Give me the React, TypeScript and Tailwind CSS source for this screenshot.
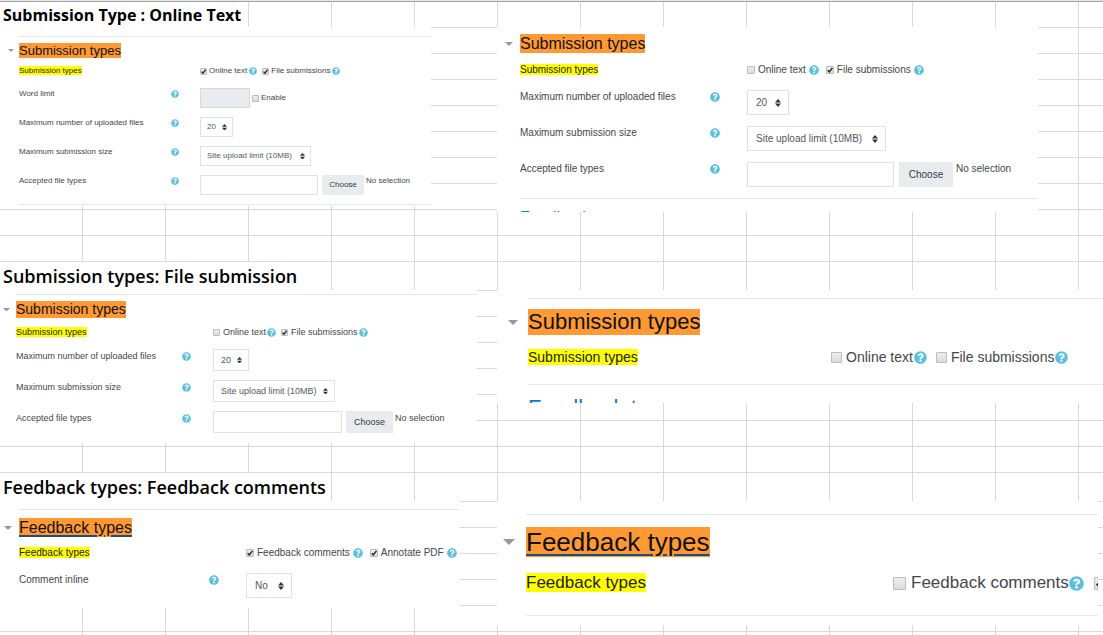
import { ReactNode, useId } from "react";
import { FaQuestionCircle } from "react-icons/fa";

// Every panel is the same form at another zoom level.
const sizes = {
  xs: {
    indent: "pl-[19px]",
    rule: "ml-[19px]",
    caretBox: "w-[19px] pr-[5px]",
    caret: "w-[6px]",
    heading: "h-[28px] pt-[6px] text-[13px] leading-[15px]",
    text: "text-[8px] leading-[12px]",
    cols: "grid-cols-[152px_29px_1fr]",
    options: "h-[23px]",
    row: "h-[29px]",
    check: "size-[7px]",
    checkGap: "gap-[2px]",
    helpGap: "gap-[2px]",
    optionGap: "gap-[5px]",
    icon: "size-[8px]",
    control: "h-[20px]",
    pad: "pl-[6px] pr-[14px]",
    arrows: "right-[6px] w-[5px]",
    input: "w-[118px]",
    choose: "w-[42px]",
    gap: "gap-[4px]",
  },
  sm: {
    indent: "pl-[16px]",
    rule: "ml-[16px]",
    caretBox: "w-[16px] pr-[6px]",
    caret: "w-[7px]",
    heading: "h-[30px] pt-[6px] text-[14px] leading-[17px]",
    text: "text-[9px] leading-[14px]",
    cols: "grid-cols-[166px_31px_1fr]",
    options: "h-[24px]",
    row: "h-[31px]",
    check: "size-[7px]",
    checkGap: "gap-[3px]",
    helpGap: "gap-px",
    optionGap: "gap-[5px]",
    icon: "size-[9px]",
    control: "h-[22px]",
    pad: "pl-[7px] pr-[14px]",
    arrows: "right-[7px] w-[5px]",
    input: "w-[129px]",
    choose: "w-[47px]",
    gap: "gap-[4px]",
  },
  md: {
    indent: "pl-[23px]",
    rule: "ml-[23px]",
    caretBox: "w-[23px] pr-[7px]",
    caret: "w-[8px]",
    heading: "h-[29px] text-[16px] leading-[19px]",
    text: "text-[10px] leading-[14px]",
    cols: "grid-cols-[190px_37px_1fr]",
    options: "h-[27px]",
    row: "h-[36px]",
    check: "size-[8px]",
    checkGap: "gap-[3px]",
    helpGap: "gap-[3px]",
    optionGap: "gap-[7px]",
    icon: "size-[10px]",
    control: "h-[25px]",
    pad: "pl-[8px] pr-[16px]",
    arrows: "right-[8px] w-[6px]",
    input: "w-[147px]",
    choose: "w-[54px]",
    gap: "gap-[5px]",
  },
  mdNarrow: {
    indent: "pl-[19px]",
    rule: "ml-[19px]",
    caretBox: "w-[19px] pr-[7px]",
    caret: "w-[8px]",
    heading: "h-[36px] pt-[8px] text-[16px] leading-[19px]",
    text: "text-[10px] leading-[14px]",
    cols: "grid-cols-[190px_37px_1fr]",
    options: "h-[27px]",
    row: "h-[36px]",
    check: "size-[8px]",
    checkGap: "gap-[3px]",
    helpGap: "gap-[3px]",
    optionGap: "gap-[7px]",
    icon: "size-[10px]",
    control: "h-[25px]",
    pad: "pl-[8px] pr-[16px]",
    arrows: "right-[8px] w-[6px]",
    input: "w-[147px]",
    choose: "w-[54px]",
    gap: "gap-[5px]",
  },
  lg: {
    indent: "pl-[31px]",
    rule: "ml-[31px]",
    caretBox: "w-[31px] pr-[10px]",
    caret: "w-[10px]",
    heading: "h-[50px] pt-[10px] text-[22px] leading-[26px]",
    text: "text-[14px] leading-[16px]",
    cols: "grid-cols-[253px_50px_1fr]",
    options: "h-[35px]",
    row: "h-[50px]",
    check: "size-[11px]",
    checkGap: "gap-[4px]",
    helpGap: "gap-px",
    optionGap: "gap-[9px]",
    icon: "size-[13px]",
    control: "h-[34px]",
    pad: "pl-[11px] pr-[26px]",
    arrows: "right-[10px] w-[8px]",
    input: "w-[200px]",
    choose: "w-[74px]",
    gap: "gap-[6px]",
  },
  xl: {
    indent: "pl-[29px]",
    rule: "ml-[29px]",
    caretBox: "w-[29px] pr-[11px]",
    caret: "w-[12px]",
    heading: "h-[59px] pt-[12px] text-[26px] leading-[30px]",
    text: "text-[17px] leading-[18px]",
    cols: "grid-cols-[306px_61px_1fr]",
    options: "h-[41px]",
    row: "h-[60px]",
    check: "size-[13px]",
    checkGap: "gap-[5px]",
    helpGap: "gap-0",
    optionGap: "gap-[10px]",
    icon: "size-[15px]",
    control: "h-[40px]",
    pad: "pl-[13px] pr-[32px]",
    arrows: "right-[12px] w-[9px]",
    input: "w-[240px]",
    choose: "w-[90px]",
    gap: "gap-[8px]",
  },
};

type Size = keyof typeof sizes;

function Help({ size }: { size: Size }) {
  return <FaQuestionCircle className={`shrink-0 text-[#5bc0de] ${sizes[size].icon}`} />;
}

function Check({ size, label, checked = false, help = true }: { size: Size; label: string; checked?: boolean; help?: boolean }) {
  const s = sizes[size];
  return (
    <span className={`flex shrink-0 items-center ${s.helpGap}`}>
      <label className={`flex items-center ${s.checkGap}`}>
        <span className={`relative block shrink-0 ${s.check}`}>
          <input
            type="checkbox"
            defaultChecked={checked}
            className="peer block size-full appearance-none rounded-[1px] border border-[#bcbcbc] bg-linear-to-b from-[#eeeeee] to-[#dcdcdc]"
          />
          <svg viewBox="0 0 10 10" className="pointer-events-none absolute inset-0 hidden size-full peer-checked:block">
            <path d="M2.2 5.2 4.2 7.4 8 2.4" fill="none" stroke="#222" strokeWidth="1.8" />
          </svg>
        </span>
        {label}
      </label>
      {help && <Help size={size} />}
    </span>
  );
}

function Row({ size, label, children }: { size: Size; label: string; children: (id: string) => ReactNode }) {
  const s = sizes[size];
  const id = useId();
  return (
    <div className={`grid items-start ${s.cols} ${s.row} ${s.text}`}>
      <label htmlFor={id}>{label}</label>
      <span className="flex h-[1lh] items-center">
        <Help size={size} />
      </span>
      {children(id)}
    </div>
  );
}

function Select({ size, id, value, width }: { size: Size; id: string; value: string; width: string }) {
  const s = sizes[size];
  return (
    <span className={`relative block ${width}`}>
      <select id={id} className={`block w-full appearance-none border border-[#dde2e7] bg-white text-[#55595c] ${s.control} ${s.pad}`}>
        <option>{value}</option>
      </select>
      <span className={`pointer-events-none absolute inset-y-0 flex items-center ${s.arrows}`}>
        <svg viewBox="0 0 6 8" className="w-full fill-[#333]">
          <path d="M0 3.4 3 0l3 3.4zM0 4.6 3 8l3-3.4z" />
        </svg>
      </span>
    </span>
  );
}

function FilePicker({ size, id }: { size: Size; id: string }) {
  const s = sizes[size];
  return (
    <div className={`flex items-start ${s.gap}`}>
      <input id={id} type="text" className={`border border-[#dde2e7] ${s.control} ${s.input}`} />
      <button type="button" className={`bg-[#e9ecef] text-[#373a3c] ${s.control} ${s.choose}`}>
        Choose
      </button>
      <span className="-ml-0.5 whitespace-nowrap">No selection</span>
    </div>
  );
}

type PanelProps = {
  size: Size;
  title: string;
  className: string;
  underline?: string;
  options: ReactNode;
  children?: ReactNode;
};

function Panel({ size, title, className, underline = "", options, children }: PanelProps) {
  const s = sizes[size];
  return (
    <div className={`w-full overflow-hidden bg-white text-[#43474a] ${className}`}>
      {size !== "md" && <div className={`border-t border-[#e4e7ea] ${s.rule}`} />}
      <div className={`flex items-start ${s.heading}`}>
        <span className={`flex h-[1lh] shrink-0 items-center justify-end ${s.caretBox}`}>
          <svg viewBox="0 0 10 5" className={`fill-[#999] ${s.caret}`}>
            <path d="M0 0h10L5 5z" />
          </svg>
        </span>
        <h3 className={`bg-[#ff9933] text-[#111] ${underline}`}>{title}</h3>
      </div>
      <div className={s.indent}>
        <div className={`grid items-start ${s.cols} ${s.options} ${s.text}`}>
          <div className="col-span-2">
            <span className="bg-[#ffff00] text-[#222]">{title}</span>
          </div>
          <div className={`flex h-[1lh] items-center whitespace-nowrap ${s.optionGap}`}>{options}</div>
        </div>
        {children}
      </div>
    </div>
  );
}

function Title({ children, className }: { children: ReactNode; className: string }) {
  return <h2 className={`flex h-full items-center bg-white pl-[3px] font-['Open_Sans',sans-serif] whitespace-nowrap text-black ${className}`}>{children}</h2>;
}

const rows = "flex items-start bg-[repeating-linear-gradient(to_bottom,#d9d9d9_0_1px,transparent_1px_26px)]";

export default function App() {
  return (
    <main className="min-h-screen overflow-hidden bg-white bg-[repeating-linear-gradient(to_right,transparent_0_82px,#d9d9d9_82px_83px)] font-['Liberation_Sans',Arial,sans-serif]">
      <section>
        <div className="h-[2px] border-b border-[#a3a9ad] bg-[#e3e6e8]" />
        <div className="h-[25px]">
          <Title className="w-[248px] text-[16px] font-bold">Submission Type : Online Text</Title>
        </div>
        <div className={`h-[234px] ${rows}`}>
          <div className="w-[497px] shrink-0">
            <Panel
              size="xs"
              title="Submission types"
              className="h-[179px] max-w-[431px] pt-[9px]"
              options={
                <>
                  <Check size="xs" label="Online text" checked />
                  <Check size="xs" label="File submissions" checked />
                </>
              }
            >
              <Row size="xs" label="Word limit">
                {(id) => (
                  <div className="flex items-center gap-[2px]">
                    <input id={id} type="text" disabled className="h-[20px] w-[50px] border border-[#d5dade] bg-[#e9ecef]" />
                    <Check size="xs" label="Enable" help={false} />
                  </div>
                )}
              </Row>
              <Row size="xs" label="Maximum number of uploaded files">
                {(id) => <Select size="xs" id={id} value="20" width="w-[33px]" />}
              </Row>
              <Row size="xs" label="Maximum submission size">
                {(id) => <Select size="xs" id={id} value="Site upload limit (10MB)" width="w-[111px]" />}
              </Row>
              <Row size="xs" label="Accepted file types">
                {(id) => <FilePicker size="xs" id={id} />}
              </Row>
              <div className="border-t border-[#e4e7ea]" />
            </Panel>
          </div>
          <div className="min-w-0 flex-1">
            <Panel
              size="md"
              title="Submission types"
              className="h-[185px] max-w-[541px] pt-[7px]"
              options={
                <>
                  <Check size="md" label="Online text" />
                  <Check size="md" label="File submissions" checked />
                </>
              }
            >
              <Row size="md" label="Maximum number of uploaded files">
                {(id) => <Select size="md" id={id} value="20" width="w-[42px]" />}
              </Row>
              <Row size="md" label="Maximum submission size">
                {(id) => <Select size="md" id={id} value="Site upload limit (10MB)" width="w-[139px]" />}
              </Row>
              <Row size="md" label="Accepted file types">
                {(id) => <FilePicker size="md" id={id} />}
              </Row>
              <h3 className="border-t border-[#e4e7ea] pt-[9px] text-[16px] leading-[19px] text-[#1177d1]">Feedback types</h3>
            </Panel>
          </div>
        </div>
      </section>

      <section>
        <div className="h-[29px] border-t border-[#d9d9d9]">
          <Title className="w-[331px] text-[18px] font-[650]">Submission types: File submission</Title>
        </div>
        <div className={`h-[182px] ${rows}`}>
          <div className="w-[497px] shrink-0">
            <Panel
              size="sm"
              title="Submission types"
              className="h-[153px] max-w-[477px] pt-[4px]"
              options={
                <>
                  <Check size="sm" label="Online text" />
                  <Check size="sm" label="File submissions" checked />
                </>
              }
            >
              <Row size="sm" label="Maximum number of uploaded files">
                {(id) => <Select size="sm" id={id} value="20" width="w-[36px]" />}
              </Row>
              <Row size="sm" label="Maximum submission size">
                {(id) => <Select size="sm" id={id} value="Site upload limit (10MB)" width="w-[122px]" />}
              </Row>
              <Row size="sm" label="Accepted file types">
                {(id) => <FilePicker size="sm" id={id} />}
              </Row>
            </Panel>
          </div>
          <div className="min-w-0 flex-1">
            <Panel
              size="lg"
              title="Submission types"
              className="h-[113px] pt-[8px]"
              options={
                <>
                  <Check size="lg" label="Online text" />
                  <Check size="lg" label="File submissions" />
                </>
              }
            >
              <h3 className="border-t border-[#e4e7ea] pt-[10px] text-[22px] leading-[26px] text-[#1177d1]">Feedback types</h3>
            </Panel>
          </div>
        </div>
      </section>

      <section>
        <div className="h-[29px] border-t border-[#d9d9d9]">
          <Title className="w-[331px] text-[18px] font-[650]">Feedback types: Feedback comments</Title>
        </div>
        <div className={`h-[134px] ${rows}`}>
          <div className="w-[497px] shrink-0">
            <Panel
              size="mdNarrow"
              title="Feedback types"
              underline="underline decoration-[#1c4f80] decoration-2 underline-offset-2"
              className="h-[107px] max-w-[459px] pt-[8px]"
              options={
                <>
                  <Check size="mdNarrow" label="Feedback comments" checked />
                  <Check size="mdNarrow" label="Annotate PDF" checked />
                </>
              }
            >
              <Row size="mdNarrow" label="Comment inline">
                {(id) => <Select size="mdNarrow" id={id} value="No" width="w-[46px]" />}
              </Row>
            </Panel>
          </div>
          <div className="min-w-0 flex-1 pr-[5px]">
            <Panel
              size="xl"
              title="Feedback types"
              underline="underline decoration-[#1c4f80] decoration-2 underline-offset-3"
              className="h-[124px] pt-[13px]"
              options={
                <>
                  <Check size="xl" label="Feedback comments" />
                  <Check size="xl" label="Annotate PDF" checked />
                </>
              }
            >
              <div className="border-t border-[#e4e7ea]" />
            </Panel>
          </div>
        </div>
      </section>
    </main>
  );
}
